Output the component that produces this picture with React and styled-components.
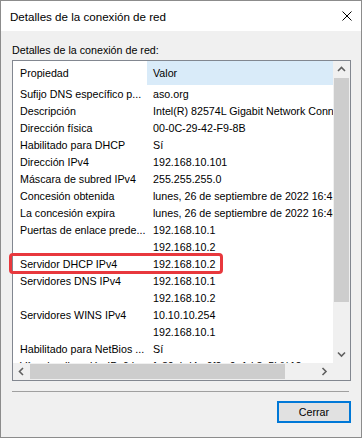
import React from 'react'
import styled, { createGlobalStyle } from 'styled-components'

const GlobalStyle = createGlobalStyle`
  html, body {
    margin: 0;
    padding: 0;
    background: #f0f0f0;
  }
  * { box-sizing: border-box; }
`

const rows = [
  ['Sufijo DNS específico p...', 'aso.org'],
  ['Descripción', 'Intel(R) 82574L Gigabit Network Connection'],
  ['Dirección física', '00-0C-29-42-F9-8B'],
  ['Habilitado para DHCP', 'Sí'],
  ['Dirección IPv4', '192.168.10.101'],
  ['Máscara de subred IPv4', '255.255.255.0'],
  ['Concesión obtenida', 'lunes, 26 de septiembre de 2022 16:42:18'],
  ['La concesión expira', 'lunes, 26 de septiembre de 2022 16:48:18'],
  ['Puertas de enlace prede...', '192.168.10.1'],
  ['', '192.168.10.2'],
  ['Servidor DHCP IPv4', '192.168.10.2'],
  ['Servidores DNS IPv4', '192.168.10.1'],
  ['', '192.168.10.2'],
  ['Servidores WINS IPv4', '10.10.10.254'],
  ['', '192.168.10.1'],
  ['Habilitado para NetBios ...', 'Sí'],
  ['Vínculo: dirección IPv6 l...', 'fe80::bd4a:6f2c:9e1d:3a5b%12'],
]

const Chevron = ({ dir }) => {
  const d = {
    up: 'M1 5 L4.5 1.5 L8 5',
    down: 'M1 1.5 L4.5 5 L8 1.5',
    left: 'M5 1 L1.5 4.5 L5 8',
    right: 'M1.5 1 L5 4.5 L1.5 8',
  }[dir]
  const vertical = dir === 'up' || dir === 'down'
  return (
    <svg width={vertical ? 9 : 7} height={vertical ? 7 : 9} viewBox={vertical ? '0 0 9 7' : '0 0 7 9'}>
      <path d={d} fill="none" stroke="#606060" strokeWidth="1.6" />
    </svg>
  )
}

const App = () => (
  <>
    <GlobalStyle />
    <Window>
      <TitleBar>
        <Title>Detalles de la conexión de red</Title>
        <svg width="10" height="10" viewBox="0 0 10 10">
          <path d="M0.5 0.5 L9.5 9.5 M9.5 0.5 L0.5 9.5" stroke="#000" strokeWidth="1" />
        </svg>
      </TitleBar>

      <Body>
        <Label>Detalles de la conexión de red:</Label>

        <ListBox>
          <Viewport>
            <Header>
              <HeaderCell>Propiedad</HeaderCell>
              <HeaderCell active>Valor</HeaderCell>
            </Header>
            {rows.map(([name, value], i) => (
              <Row key={i}>
                <NameCell>{name}</NameCell>
                <ValueCell>{value}</ValueCell>
              </Row>
            ))}
          </Viewport>

          <VScroll>
            <Arrow><Chevron dir="up" /></Arrow>
            <VTrack><VThumb /></VTrack>
            <Arrow><Chevron dir="down" /></Arrow>
          </VScroll>

          <HScroll>
            <Arrow><Chevron dir="left" /></Arrow>
            <HTrack><HThumb /></HTrack>
            <Arrow><Chevron dir="right" /></Arrow>
          </HScroll>

          <Corner />

          <Highlight />
        </ListBox>

        <Separator />

        <Footer>
          <Button>Cerrar</Button>
        </Footer>
      </Body>
    </Window>
  </>
)

export default App

const Window = styled.div`
  width: 362px;
  height: 438px;
  border: 1px solid #8c8c8c;
  background: #f0f0f0;
  display: flex;
  flex-direction: column;
  font-family: "Liberation Sans", Arial, sans-serif;
  color: #000;
`

const TitleBar = styled.div`
  height: 30px;
  flex: none;
  background: #fff;
  display: flex;
  align-items: center;
  justify-content: space-between;
  padding: 0 9px 0 9px;
`

const Title = styled.span`
  font-size: 11.6px;
`

const Body = styled.div`
  flex: 1;
  display: flex;
  flex-direction: column;
  padding: 12px 10px 0 11px;
`

const Label = styled.div`
  font-size: 10.7px;
  line-height: 14px;
  height: 17px;
`

const ListBox = styled.div`
  position: relative;
  width: 339px;
  height: 321px;
  border: 1px solid #828790;
  background: #fff;
  display: grid;
  grid-template-columns: 320px 17px;
  grid-template-rows: 302px 17px;
`

const Viewport = styled.div`
  overflow: hidden;
  font-size: 10.7px;
`

const Header = styled.div`
  display: flex;
  height: 24px;
  align-items: stretch;
`

const HeaderCell = styled.div`
  display: flex;
  align-items: center;
  width: ${p => p.active ? 'auto' : '134px'};
  flex: ${p => p.active ? 1 : 'none'};
  padding-left: ${p => p.active ? '6px' : '7px'};
  background: ${p => p.active ? '#d9ebf9' : '#fff'};
`

const Row = styled.div`
  display: flex;
  height: 17px;
  align-items: center;
  white-space: nowrap;
`

const NameCell = styled.div`
  width: 134px;
  flex: none;
  padding-left: 7px;
  overflow: hidden;
`

const ValueCell = styled.div`
  padding-left: 6px;
`

const VScroll = styled.div`
  background: #f0f0f0;
  display: flex;
  flex-direction: column;
`

const HScroll = styled.div`
  background: #f0f0f0;
  display: flex;
`

const Arrow = styled.div`
  width: 17px;
  height: 17px;
  flex: none;
  display: flex;
  align-items: center;
  justify-content: center;
`

const VTrack = styled.div`
  flex: 1;
  padding: 0 1px;
`

const VThumb = styled.div`
  height: 224px;
  background: #cdcdcd;
`

const HTrack = styled.div`
  flex: 1;
  padding: 1px 0;
`

const HThumb = styled.div`
  width: 255px;
  height: 100%;
  background: #cdcdcd;
`

const Corner = styled.div`
  background: #f0f0f0;
`

const Highlight = styled.div`
  position: absolute;
  left: -4px;
  top: 192px;
  width: 214px;
  height: 21px;
  border: 3px solid #e8383d;
  border-radius: 4px;
  pointer-events: none;
`

const Separator = styled.div`
  margin-top: 10px;
  width: 337px;
  border-top: 1px solid #a0a0a0;
`

const Footer = styled.div`
  display: flex;
  justify-content: flex-end;
  padding-top: 9px;
  padding-right: 0;
`

const Button = styled.button`
  width: 74px;
  height: 22px;
  border: 2px solid #0078d7;
  background: #e1e1e1;
  font-family: inherit;
  font-size: 10.7px;
  color: #000;
  padding: 0;
`
